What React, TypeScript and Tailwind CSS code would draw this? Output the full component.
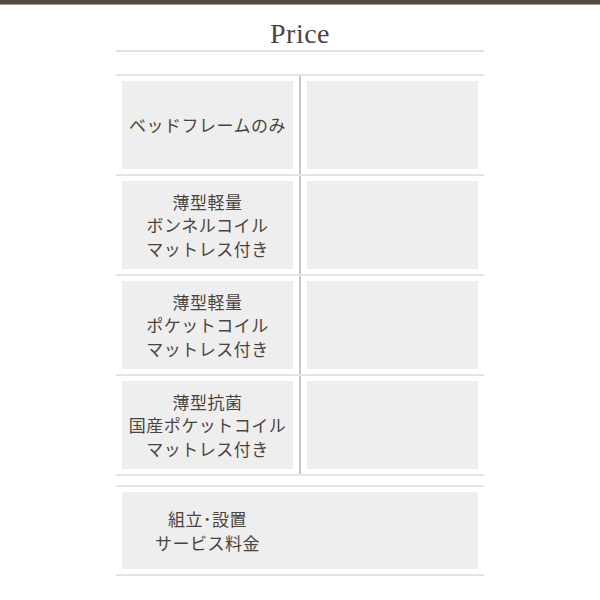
import React from "react";

type Row = {
  label: string[];
};

const rows: Row[] = [
  { label: ["ベッドフレームのみ"] },
  { label: ["薄型軽量", "ボンネルコイル", "マットレス付き"] },
  { label: ["薄型軽量", "ポケットコイル", "マットレス付き"] },
  { label: ["薄型抗菌", "国産ポケットコイル", "マットレス付き"] },
];

const jp = "font-['Noto_Sans_CJK_JP','Noto_Sans',sans-serif]";

function Label({ lines }: { lines: string[] }) {
  return (
    <div className={`text-center text-[17px] leading-[23.5px] tracking-[0.5px] text-[#4a4441] ${jp}`}>
      {lines.map((l) => (
        <div key={l}>{l}</div>
      ))}
    </div>
  );
}

export default function App() {
  return (
    <div className="min-h-[600px] w-[600px] bg-white">
      <div className="h-[4px] bg-[#564944]" />
      <div className="h-[1px] bg-[#a39891]" />

      <div className="mx-auto w-[368px]">
        <h2 className="pt-[14px] text-center font-['Liberation_Serif',serif] text-[28px] leading-[29px] tracking-[0.5px] text-[#4d4441]">
          Price
        </h2>
        <div className="mt-[2px] h-[2px] bg-[#e2e2e2]" />

        <div className="mt-[22px] border-t-2 border-[#e4e4e4]">
          {rows.map((row, i) => (
            <div key={i} className="flex border-b-2 border-[#e4e4e4]">
              <div className="flex w-[183px] px-[6px] py-[5px]">
                <div className="flex h-[88px] flex-1 items-center justify-center bg-[#eeeeee]">
                  <Label lines={row.label} />
                </div>
              </div>
              <div className="w-[2px] bg-[#c6c6c6]" />
              <div className="flex flex-1 px-[6px] py-[5px]">
                <div className="h-[88px] flex-1 bg-[#eeeeee]" />
              </div>
            </div>
          ))}
        </div>

        <div className="mt-[9px] border-y-2 border-[#e4e4e4] px-[6px] py-[5px]">
          <div className="flex h-[77px] items-center bg-[#eeeeee]">
            <div className="flex w-[171px] justify-center">
              <Label lines={["組立･設置", "サービス料金"]} />
            </div>
          </div>
        </div>
      </div>
    </div>
  );
}
